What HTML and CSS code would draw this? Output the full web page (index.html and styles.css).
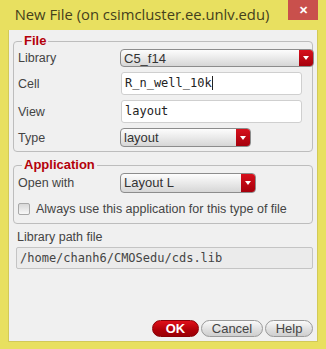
FILE: index.html
```html
<!DOCTYPE html>
<html lang="en">

<head>
    <meta charset="UTF-8" />
    <title>New File</title>
    <link rel="stylesheet" href="styles.css">
</head>

<body>
    <div class="window">
        <div class="titlebar">
            <span class="title">New File (on csimcluster.ee.unlv.edu)</span>
            <span class="close">&#x2715;</span>
        </div>
        <div class="client">
            <fieldset class="group">
                <legend>File</legend>
                <div class="form">
                    <label class="lbl">Library</label>
                    <div class="combo combo-wide">
                        <span class="combo-text">C5_f14</span>
                        <span class="combo-btn"></span>
                    </div>
                    <label class="lbl">Cell</label>
                    <div class="field">R_n_well_10k<span class="caret"></span></div>
                    <label class="lbl">View</label>
                    <div class="field">layout</div>
                    <label class="lbl">Type</label>
                    <div class="combo combo-type">
                        <span class="combo-text">layout</span>
                        <span class="combo-btn"></span>
                    </div>
                </div>
            </fieldset>

            <fieldset class="group group-app">
                <legend>Application</legend>
                <div class="form">
                    <label class="lbl">Open with</label>
                    <div class="combo combo-app">
                        <span class="combo-text">Layout L</span>
                        <span class="combo-btn"></span>
                    </div>
                </div>
                <label class="check">
                    <span class="box"></span>
                    Always use this application for this type of file
                </label>
            </fieldset>

            <div class="path-lbl">Library path file</div>
            <div class="path">/home/chanh6/CMOSedu/cds.lib</div>

            <div class="buttons">
                <button class="btn btn-ok">OK</button>
                <button class="btn btn-cancel">Cancel</button>
                <button class="btn btn-help">Help</button>
            </div>
        </div>
    </div>
</body>

</html>
```

FILE: styles.css
```css
html {
    -webkit-font-smoothing: antialiased;
    box-sizing: border-box;
    height: 100%;
}

*,
*:before,
*:after {
    box-sizing: inherit;
}

body {
    margin: 0;
    font-family: "Liberation Sans", Arial, sans-serif;
    font-size: 12px;
    color: #333;
}

.window {
    width: 326px;
    height: 349px;
    background: #e8e060;
    padding: 0 8px 7px;
    display: flex;
    flex-direction: column;
}

.titlebar {
    height: 30px;
    flex: none;
    display: flex;
    justify-content: center;
    align-items: center;
    position: relative;
}

.title {
    font-family: "Open Sans", "Noto Sans", sans-serif;
    font-size: 14.8px;
    color: #44401c;
    margin-left: -42px;
    margin-top: -2px;
}

.close {
    position: absolute;
    right: 0;
    top: 0;
    width: 30px;
    height: 20px;
    background: #c9504c;
    color: #fff;
    font-size: 11px;
    font-weight: bold;
    display: flex;
    justify-content: center;
    align-items: center;
}

.client {
    flex: 1;
    background: #f0f0f0;
    border: 1px solid #d2ca58;
    border-top: none;
    padding: 4px 4px 4px 4px;
    display: flex;
    flex-direction: column;
}

.group {
    margin: 0;
    border: 1px solid #bdbdbd;
    border-radius: 4px;
    padding: 1px 4px 4px 4px;
}

.group legend {
    font-weight: bold;
    font-size: 13px;
    line-height: 14px;
    color: #b4000a;
    padding: 0 2px;
    margin-left: 4px;
}

.group-app {
    margin-top: 6px;
    padding-bottom: 7px;
}

.form {
    display: grid;
    grid-template-columns: 102px 1fr;
    row-gap: 5px;
    align-items: center;
}

.lbl {
    font-size: 12.5px;
    color: #444;
}

.combo {
    height: 19px;
    display: flex;
    border: 1px solid #8c8c8c;
    border-radius: 4px;
    background: linear-gradient(#fdfdfd, #e6e6e6 60%, #d6d6d6);
    overflow: hidden;
}

.combo-text {
    flex: 1;
    padding-left: 3px;
    font-size: 13px;
    line-height: 17px;
    color: #333;
}

.combo-btn {
    width: 14px;
    background: linear-gradient(#d6101c, #a6000c);
    display: flex;
    justify-content: center;
    align-items: center;
}

.combo-btn:after {
    content: "";
    border-left: 3.5px solid transparent;
    border-right: 3.5px solid transparent;
    border-top: 4px solid #fff;
}

.combo-wide {
    margin-right: -6px;
    height: 18px;
}

.combo-type {
    width: 131px;
}

.combo-app {
    width: 136px;
    height: 20px;
}

.field {
    height: 23px;
    margin: 0 6px 0 1px;
    background: #fff;
    border: 1px solid #cfcfcf;
    border-radius: 3px;
    font-family: "DejaVu Sans Mono", "Liberation Mono", monospace;
    font-size: 12px;
    line-height: 21px;
    padding-left: 3px;
    color: #222;
}

.caret {
    display: inline-block;
    width: 1px;
    height: 14px;
    background: #222;
    vertical-align: -3px;
}

.check {
    display: flex;
    align-items: center;
    gap: 6px;
    margin-top: 9px;
    font-size: 12.5px;
    color: #444;
}

.box {
    width: 12px;
    height: 12px;
    border: 1px solid #a8a8a8;
    border-radius: 2px;
    background: linear-gradient(#d8d8d8, #f8f8f8);
}

.path-lbl {
    margin: 5px 0 0 4px;
    line-height: 16px;
    font-size: 12.5px;
    color: #444;
}

.path {
    margin: 2px 0 0 3px;
    height: 22px;
    background: #ebebeb;
    border: 1px solid #c4c4c4;
    border-radius: 2px;
    font-family: "DejaVu Sans Mono", "Liberation Mono", monospace;
    font-size: 12px;
    line-height: 20px;
    padding-left: 3px;
    color: #444;
}

.buttons {
    margin-top: auto;
    display: flex;
    justify-content: flex-end;
    gap: 2px;
    padding-right: 0;
}

.btn {
    height: 17px;
    border: 1px solid #9a9a9a;
    border-radius: 9px;
    background: linear-gradient(#fafafa, #dedede 60%, #cfcfcf);
    font-family: "Liberation Sans", Arial, sans-serif;
    font-size: 13px;
    color: #444;
    padding: 0;
    line-height: 15px;
}

.btn-ok {
    width: 47px;
    background: linear-gradient(#e0101a, #b00008 60%, #9a0006);
    border-color: #8a0006;
    color: #fff;
    font-weight: bold;
}

.btn-cancel {
    width: 62px;
}

.btn-help {
    width: 48px;
}
```
